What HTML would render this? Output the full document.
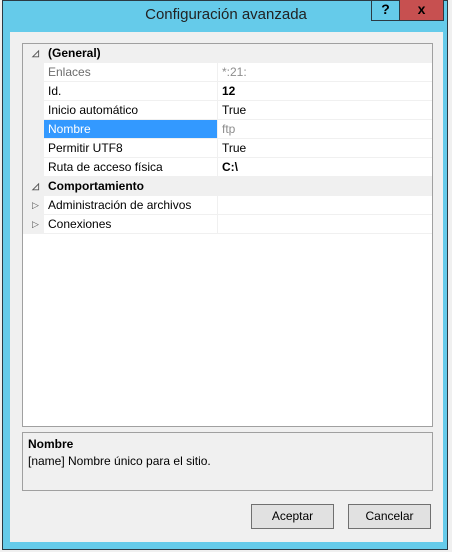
<!DOCTYPE html>
<html><head><style>
*{margin:0;padding:0;box-sizing:border-box}
body{width:452px;height:552px;background:#f0f0f0;position:relative;overflow:hidden;font-family:"Liberation Sans",sans-serif;font-size:12px;color:#000}
.win{position:absolute;left:2px;top:0;width:446px;height:550px;background:#65cbea;border:1px solid #2b3a44}
.title{position:absolute;left:0;width:452px;top:6px;text-align:center;font-size:15px;color:#222}
.q{position:absolute;left:371px;top:0;width:29px;height:21px;border:1px solid #2b3a44;border-top:none;text-align:center;font-weight:bold;font-size:14px;line-height:19px}
.x{position:absolute;left:399px;top:0;width:45px;height:21px;background:#c75050;border:1px solid #2b3a44;border-top:none;text-align:center;font-weight:bold;font-size:14px;line-height:19px}
.client{position:absolute;left:10px;top:32px;width:433px;height:510px;background:#f0f0f0}
.grid{position:absolute;left:22px;top:43px;width:411px;height:384px;border:1px solid #a0a0a0;background:#fff}
.row{position:absolute;left:0;width:409px;height:19px;border-bottom:1px solid #f0f0f0;line-height:19px}
.g{position:absolute;left:0;top:0;width:21px;height:19px;background:#f0f0f0}
.n{position:absolute;left:25px;top:0;width:170px;height:18px}
.v{position:absolute;left:194px;top:0;height:18px;border-left:1px solid #f0f0f0;padding-left:4px}
.cat{background:#f0f0f0;font-weight:bold}
.tri{position:absolute;left:9px;top:0;font-size:9px;color:#555}
.help{position:absolute;left:22px;top:432px;width:411px;height:59px;border:1px solid #a0a0a0;padding:3px 5px;line-height:17px}
.btn{position:absolute;top:504px;width:83px;height:25px;background:#e1e1e1;border:1px solid #707070;text-align:center;line-height:23px}
</style></head><body>
<div class="win"></div>
<div class="title">Configuración avanzada</div>
<div class="q">?</div>
<div class="x">x</div>
<div class="client"></div>
<div class="grid">
<div class="row cat" style="top:0"><span class="tri">◿</span><span class="n">(General)</span></div>
<div class="row" style="top:19px;color:#6d6d6d"><div class="g"></div><span class="n">Enlaces</span><span class="v" style="color:#8d8d8d">*:21:</span></div>
<div class="row" style="top:38px"><div class="g"></div><span class="n">Id.</span><span class="v" style="font-weight:bold">12</span></div>
<div class="row" style="top:57px"><div class="g"></div><span class="n">Inicio automático</span><span class="v">True</span></div>
<div class="row" style="top:76px"><div class="g"></div><span class="n" style="background:#3399ff;color:#fff;left:21px;padding-left:4px;width:173px">Nombre</span><span class="v" style="color:#8d8d8d">ftp</span></div>
<div class="row" style="top:95px"><div class="g"></div><span class="n">Permitir UTF8</span><span class="v">True</span></div>
<div class="row" style="top:114px"><div class="g"></div><span class="n">Ruta de acceso física</span><span class="v" style="font-weight:bold">C:\</span></div>
<div class="row cat" style="top:133px"><span class="tri">◿</span><span class="n">Comportamiento</span></div>
<div class="row" style="top:152px"><div class="g"></div><span class="tri">▷</span><span class="n">Administración de archivos</span><span class="v">&nbsp;</span></div>
<div class="row" style="top:171px"><div class="g"></div><span class="tri">▷</span><span class="n">Conexiones</span><span class="v">&nbsp;</span></div>
</div>
<div class="help"><b>Nombre</b><br>[name] Nombre único para el sitio.</div>
<div class="btn" style="left:251px">Aceptar</div>
<div class="btn" style="left:348px">Cancelar</div>
</body></html>
